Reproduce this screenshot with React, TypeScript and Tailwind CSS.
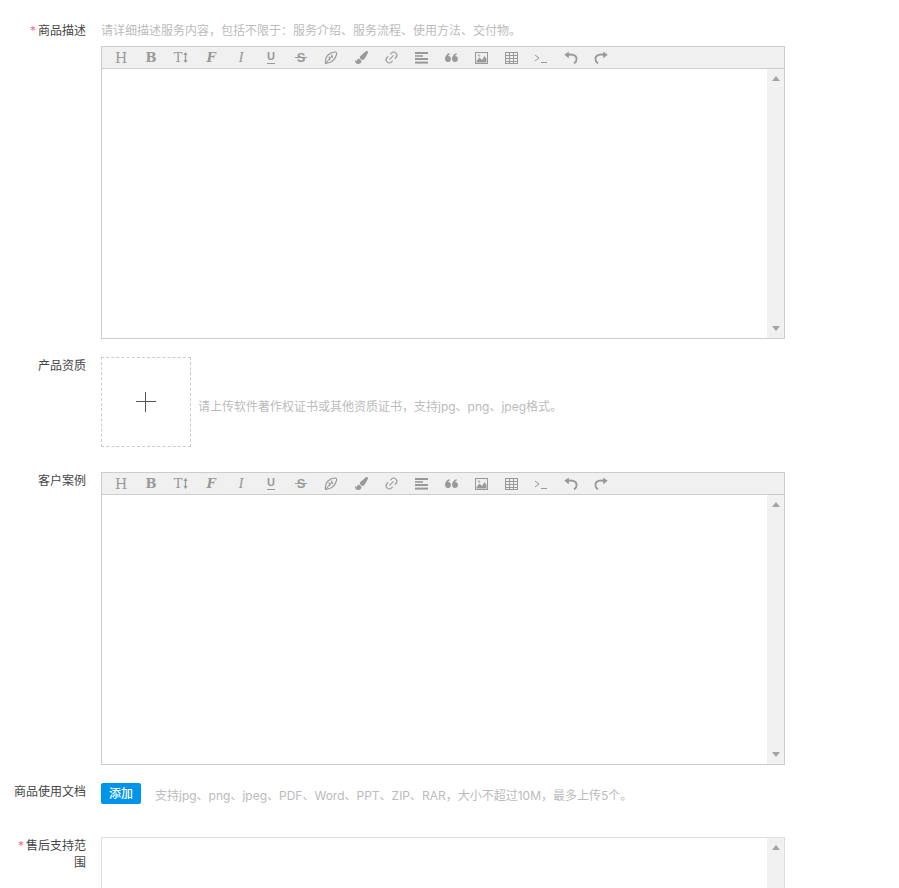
import React from 'react';
import { FaPaintBrush } from 'react-icons/fa';
import { Link2 } from 'lucide-react';

const fontStack = { fontFamily: 'Inter, "Noto Sans CJK SC", sans-serif' };

function Letter({ children, className }: { children: React.ReactNode; className: string }) {
  return <span className={`leading-none text-[#999] ${className}`} style={{ fontFamily: '"DejaVu Serif", serif' }}>{children}</span>;
}

const AlignIcon = () => (
  <svg width="13" height="12" viewBox="0 0 13 12" fill="#999">
    <rect x="0" y="0" width="13" height="2" />
    <rect x="0" y="3.2" width="8" height="1.6" />
    <rect x="0" y="6" width="13" height="2" />
    <rect x="0" y="9.6" width="13" height="2" />
  </svg>
);

const QuoteIcon = () => (
  <svg width="13" height="9" viewBox="0 0 13 9" fill="#999">
    <circle cx="3" cy="6" r="2.9" />
    <path d="M0.2 5.5C0.4 2.5 2 0.6 4.6 0.2L4.8 1.4C3.4 1.9 2.6 3 2.6 4.5Z" />
    <circle cx="10" cy="6" r="2.9" />
    <path d="M7.2 5.5C7.4 2.5 9 0.6 11.6 0.2L11.8 1.4C10.4 1.9 9.6 3 9.6 4.5Z" />
  </svg>
);

const PenIcon = () => (
  <svg width="14" height="14" viewBox="0 0 14 14" fill="none" stroke="#999" strokeWidth="1.1">
    <path d="M1.5 12.5C1.2 9 2 6 4 4C6 2 9 1 11 1C12.5 1 13 2 12.5 3.5C11.5 7 9 10.5 5.5 11.5C4 12 2.5 12.3 1.5 12.5Z" />
    <path d="M1.5 12.5L8 5M5 5.5L6 9M7.5 3.5L8.7 7" />
  </svg>
);

const ImageIcon = () => (
  <svg width="13" height="12" viewBox="0 0 13 12">
    <rect x="0.5" y="0.5" width="12" height="11" fill="#eee" stroke="#999" />
    <path d="M1.5 10.5V9L4.5 5.5L7 8L9.5 4L11.5 7V10.5Z" fill="#999" />
    <circle cx="4" cy="3.5" r="1.2" fill="#bbb" />
  </svg>
);

const TableIcon = () => (
  <svg width="13" height="12" viewBox="0 0 13 12" fill="none" stroke="#999" strokeWidth="1">
    <rect x="0.5" y="0.5" width="12" height="11" />
    <path d="M0.5 3.5H12.5M0.5 6.5H12.5M0.5 9.5H12.5M4.5 0.5V11.5M8.5 0.5V11.5" />
  </svg>
);

const TerminalIcon = () => (
  <svg width="14" height="12" viewBox="0 0 14 12" fill="none" stroke="#999" strokeWidth="1">
    <path d="M1 3L5 6L1 9M7 10.5H13" />
  </svg>
);

const UndoIcon = () => (
  <svg width="14" height="13" viewBox="0 0 14 13" fill="none" stroke="#999" strokeWidth="1.8">
    <path d="M3 4.3C7 2.6 12.6 3.6 12.6 8C12.6 10 11.6 11.5 10 12.4" />
    <path d="M0.3 3.8L4.8 0.6V7.2Z" fill="#999" stroke="none" />
  </svg>
);

const RedoIcon = () => (
  <svg width="14" height="13" viewBox="0 0 14 13" fill="none" stroke="#999" strokeWidth="1.8">
    <path d="M11 4.3C7 2.6 1.4 3.6 1.4 8C1.4 10 2.4 11.5 4 12.4" />
    <path d="M13.7 3.8L9.2 0.6V7.2Z" fill="#999" stroke="none" />
  </svg>
);

const SizeArrows = () => (
  <svg width="5" height="11" viewBox="0 0 5 11" fill="#999">
    <path d="M2.5 0L4.6 3H0.4ZM2.5 11L0.4 8H4.6Z" />
    <rect x="1.9" y="2" width="1.2" height="7" />
  </svg>
);

const tools = [
  <Letter className="text-[14px]">H</Letter>,
  <Letter className="text-[13px] font-bold">B</Letter>,
  <span className="flex items-center gap-px"><Letter className="text-[13px]">T</Letter><SizeArrows /></span>,
  <Letter className="text-[13px] font-bold italic">F</Letter>,
  <span className="text-[15px] leading-none italic text-[#999]" style={{ fontFamily: '"Liberation Serif", serif' }}>I</span>,
  <span className="border-b border-[#999] pb-px text-[11px] leading-none font-bold text-[#999]" style={{ fontFamily: '"Liberation Sans", sans-serif' }}>U</span>,
  <span className="relative text-[13px] leading-none font-bold text-[#999]" style={{ fontFamily: '"Liberation Sans", sans-serif' }}>
    S
    <span className="absolute -left-[2px] -right-[2px] top-[6px] h-px bg-[#999]" />
  </span>,
  <PenIcon />,
  <FaPaintBrush size={13} color="#999" />,
  <Link2 size={15} color="#999" strokeWidth={1.7} className="-rotate-45" />,
  <AlignIcon />,
  <QuoteIcon />,
  <ImageIcon />,
  <TableIcon />,
  <TerminalIcon />,
  <UndoIcon />,
  <RedoIcon />,
];

function ScrollTrack({ showDown = true }: { showDown?: boolean }) {
  return (
    <div className="w-[17px] bg-[#f1f1f1] flex flex-col items-center justify-between py-[7px] shrink-0">
      <div className="w-0 h-0 border-x-4 border-x-transparent border-b-[5px] border-b-[#a3a3a3]" />
      {showDown && <div className="w-0 h-0 border-x-4 border-x-transparent border-t-[5px] border-t-[#a3a3a3]" />}
    </div>
  );
}

function Editor() {
  return (
    <div className="w-[684px] h-[293px] border border-[#ccc] flex flex-col">
      <div className="h-[22px] bg-[#f0f0f0] border-b border-[#ccc] flex items-center pl-1 shrink-0">
        {tools.map((tool, i) => (
          <div key={i} className="w-[30px] h-full flex items-center justify-center">{tool}</div>
        ))}
      </div>
      <div className="flex-1 flex justify-end bg-white min-h-0">
        <ScrollTrack />
      </div>
    </div>
  );
}

function Label({ text, required }: { text: string; required?: boolean }) {
  return (
    <div className="w-[86px] shrink-0 pl-3 text-right text-[12px] leading-[17px] text-[#444]">
      {required && <span className="text-[#ff6b81] mr-[2px]">*</span>}
      {text}
    </div>
  );
}

export default function App() {
  return (
    <div className="h-[888px] overflow-hidden bg-white pt-[22px]" style={fontStack}>
      <div className="flex gap-[15px]">
        <Label text="商品描述" required />
        <div>
          <div className="text-[12px] leading-[17px] text-[#bbb] mb-[7px]">请详细描述服务内容，包括不限于：服务介绍、服务流程、使用方法、交付物。</div>
          <Editor />
        </div>
      </div>

      <div className="flex gap-[15px] mt-[18px]">
        <Label text="产品资质" />
        <div className="w-[90px] h-[90px] border border-dashed border-[#ccc] flex items-center justify-center shrink-0">
          <div className="relative w-[20px] h-[20px]">
            <div className="absolute left-0 top-[9px] w-[20px] h-px bg-[#555]" />
            <div className="absolute left-[9px] top-0 w-px h-[20px] bg-[#555]" />
          </div>
        </div>
        <div className="-ml-2 mt-[41px] text-[12px] leading-[17px] text-[#bbb]">请上传软件著作权证书或其他资质证书，支持jpg、png、jpeg格式。</div>
      </div>

      <div className="flex gap-[15px] mt-[25px]">
        <Label text="客户案例" />
        <Editor />
      </div>

      <div className="flex gap-[15px] mt-[18px]">
        <Label text="商品使用文档" />
        <div className="flex items-start">
          <button className="w-[40px] h-[21px] bg-[#0095ea] rounded-[2px] text-white text-[12px] leading-none font-medium">添加</button>
          <div className="ml-[14px] mt-1 text-[12px] leading-[17px] text-[#bbb]">支持jpg、png、jpeg、PDF、Word、PPT、ZIP、RAR，大小不超过10M，最多上传5个。</div>
        </div>
      </div>

      <div className="flex gap-[15px] mt-[33px]">
        <Label text="售后支持范围" required />
        <div className="w-[684px] h-[200px] border border-[#ddd] flex justify-end">
          <ScrollTrack showDown={false} />
        </div>
      </div>
    </div>
  );
}
